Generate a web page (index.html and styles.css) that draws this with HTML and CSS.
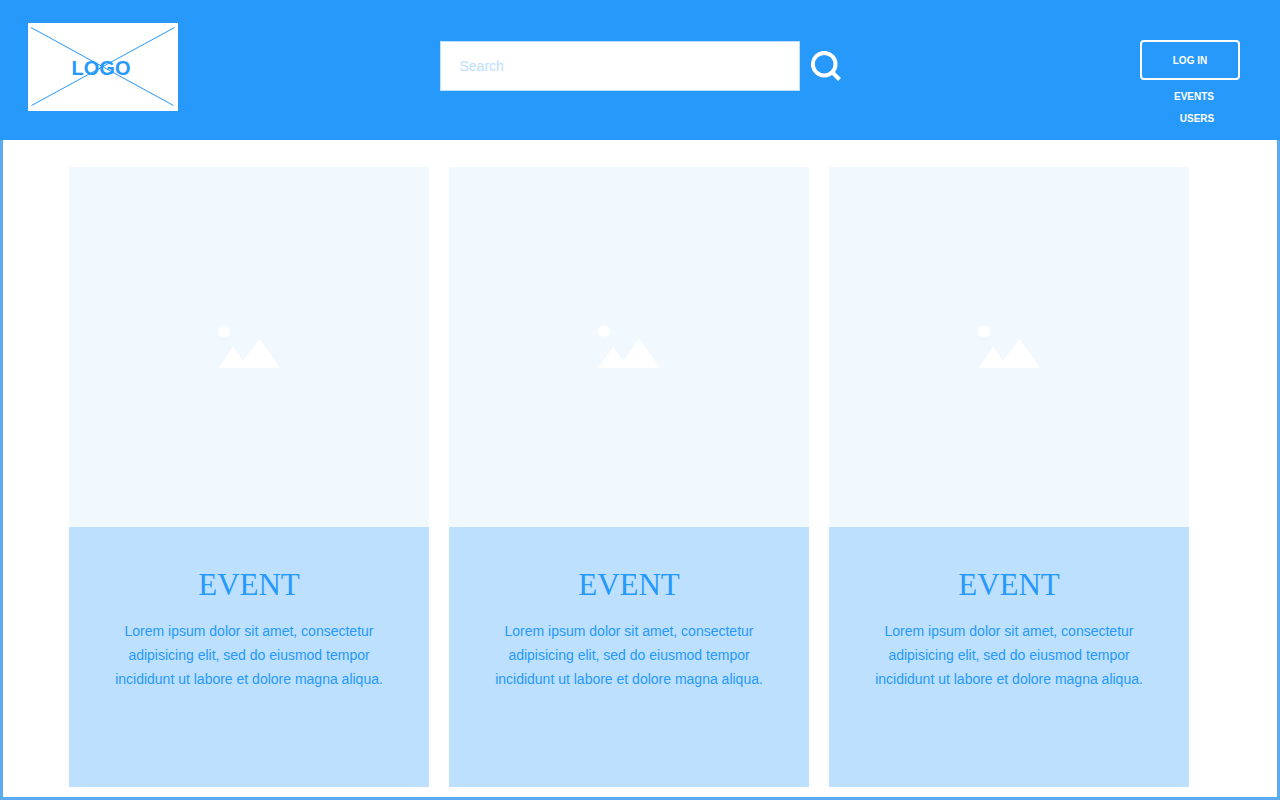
FILE: index.html
```html
<!DOCTYPE html>
<html lang="en">
<head>
<meta charset="utf-8">
<meta name="viewport" content="width=device-width, initial-scale=1">
<title>Events</title>
<link rel="stylesheet" href="styles.css">
</head>
<body>
<header class="header">
  <a class="logo" href="#">
    <svg class="logo-cross" viewBox="0 0 150 88" preserveAspectRatio="none" aria-hidden="true"><path d="M3 4.500 145.500 82.500M146.500 4.500 3.500 82.500"/></svg>
    <span class="logo-text">LOGO</span>
  </a>
  <form class="search" role="search">
    <input class="search-input" type="search" placeholder="Search" aria-label="Search">
    <button class="search-button" type="submit" aria-label="Submit search">
      <svg class="search-icon" viewBox="0 0 30 30" aria-hidden="true"><circle cx="13.200" cy="13.200" r="11.300"/><path d="m21.500 21.500 7 7"/></svg>
    </button>
  </form>
  <nav class="nav" aria-label="Main">
    <button class="login" type="button">LOG IN</button>
    <a class="nav-link" href="#">EVENTS</a>
    <a class="nav-link nav-link-users" href="#">USERS</a>
  </nav>
</header>
<main class="content">
  <article class="card">
    <div class="card-image"><svg class="picture" viewBox="0 0 62 44" aria-hidden="true"><circle cx="6" cy="6.500" r="6"/><path d="M.5 43 15 22 25 36 41.500 14 62 43Z"/></svg></div>
    <div class="card-body">
      <h2 class="card-title">EVENT</h2>
      <p class="card-text">Lorem ipsum dolor sit amet, consectetur adipisicing elit, sed do eiusmod tempor incididunt ut labore et dolore magna aliqua.</p>
    </div>
  </article>
  <article class="card">
    <div class="card-image"><svg class="picture" viewBox="0 0 62 44" aria-hidden="true"><circle cx="6" cy="6.500" r="6"/><path d="M.5 43 15 22 25 36 41.500 14 62 43Z"/></svg></div>
    <div class="card-body">
      <h2 class="card-title">EVENT</h2>
      <p class="card-text">Lorem ipsum dolor sit amet, consectetur adipisicing elit, sed do eiusmod tempor incididunt ut labore et dolore magna aliqua.</p>
    </div>
  </article>
  <article class="card">
    <div class="card-image"><svg class="picture" viewBox="0 0 62 44" aria-hidden="true"><circle cx="6" cy="6.500" r="6"/><path d="M.5 43 15 22 25 36 41.500 14 62 43Z"/></svg></div>
    <div class="card-body">
      <h2 class="card-title">EVENT</h2>
      <p class="card-text">Lorem ipsum dolor sit amet, consectetur adipisicing elit, sed do eiusmod tempor incididunt ut labore et dolore magna aliqua.</p>
    </div>
  </article>
</main>
</body>
</html>
```

FILE: styles.css
```css
* { box-sizing: border-box; }

body {
  display: flex;
  flex-direction: column;
  min-height: 100vh;
  margin: 0;
  background: #fff;
  color: #2699fb;
  font-family: "Liberation Sans", Arial, sans-serif;
  font-size: 14px;
}

.header {
  display: grid;
  grid-template-columns: 1fr auto 1fr;
  align-items: start;
  padding: 23px 28px 10px;
  background: #2699fb;
}

.logo {
  display: grid;
  place-items: center;
  width: 150px;
  height: 88px;
  background: #fff;
  color: #2699fb;
  text-decoration: none;
}

.logo-cross,
.logo-text { grid-area: 1 / 1; }

.logo-cross {
  width: 150px;
  height: 88px;
  fill: none;
  stroke: #2699fb;
}

.logo-text {
  padding: 2px 4px 0 0;
  font-size: 20px;
  font-weight: 700;
  line-height: 24px;
}

.search {
  display: flex;
  align-items: center;
  gap: 11px;
  margin: 18px 0 0;
}

.search-input {
  width: 360px;
  height: 50px;
  padding: 0 19px;
  border: 1px solid #bce0fd;
  border-radius: 0;
  background: #fff;
  color: #2699fb;
  font: inherit;
  appearance: none;
}

.search-input::placeholder { color: #bce0fd; opacity: 1; }

.search-button {
  display: flex;
  padding: 0;
  border: 0;
  background: none;
  cursor: pointer;
}

.search-icon {
  width: 30px;
  height: 30px;
  fill: none;
  stroke: #fff;
  stroke-width: 4;
}

.nav {
  display: flex;
  flex-direction: column;
  align-items: center;
  justify-self: end;
  width: 100px;
  margin: 17px 12px 0 0;
}

.login {
  width: 100%;
  height: 40px;
  margin-bottom: 6px;
  padding: 2px 0 0;
  border: 2px solid #fff;
  border-radius: 4px;
  background: none;
  color: #fff;
  font: 700 10px/12px "Liberation Sans", Arial, sans-serif;
  cursor: pointer;
}

.nav-link {
  padding-left: 8px;
  color: #fff;
  font-size: 10px;
  font-weight: 700;
  line-height: 22px;
  text-decoration: none;
}

.nav-link-users { padding-left: 14px; }

.content {
  display: grid;
  flex: 1;
  grid-template-columns: repeat(3, 1fr);
  gap: 20px;
  padding: 27px 88px 10px 66px;
  border: 3px solid #5aabf1;
  border-top: 0;
}

.card {
  display: flex;
  flex-direction: column;
  background: #bce0fd;
}

.card-image {
  display: grid;
  place-items: center;
  aspect-ratio: 1;
  background: #f1f9ff;
}

.picture {
  width: 62px;
  height: 44px;
  fill: #fff;
}

.card-body {
  flex: 1;
  padding: 40px 44px 96px;
  text-align: center;
}

.card-title {
  margin: 0 0 16px;
  font-family: "Liberation Serif", "Times New Roman", serif;
  font-size: 31px;
  font-weight: 400;
  line-height: 36px;
}

.card-text {
  margin: 0;
  line-height: 24px;
}
```
